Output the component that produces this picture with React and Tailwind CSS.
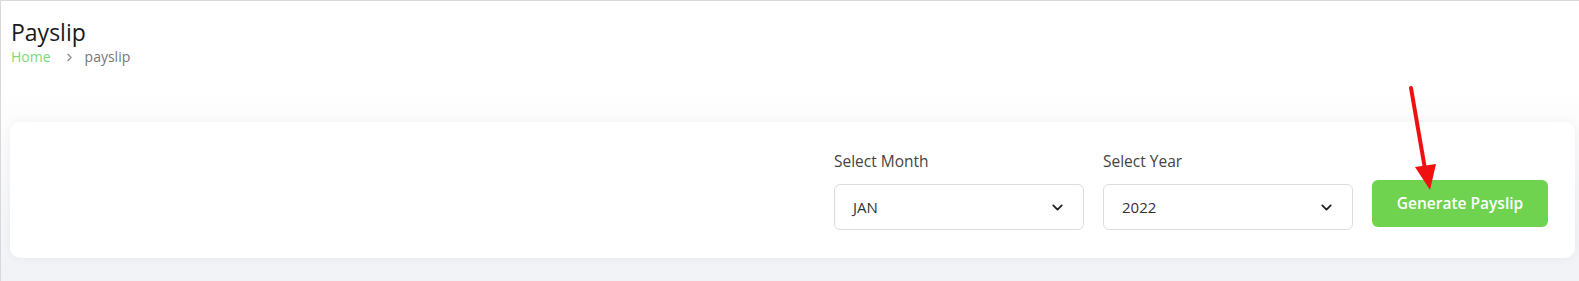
import { ChevronRight, ChevronDown } from 'lucide-react'

function SelectBox({ label, value }) {
  return (
    <div className="flex flex-col w-[250px]">
      <label className="text-[15.5px] text-[#444] mb-[13px] leading-5">{label}</label>
      <div className="h-[46px] border border-[#dcdcdc] rounded-[6px] bg-white flex items-center justify-between pl-[18px] pr-[17px] text-[15px] text-[#333]">
        <span>{value}</span>
        <ChevronDown size={17} strokeWidth={2.6} className="text-[#222]" />
      </div>
    </div>
  )
}

export default function App() {
  return (
    <div
      className="relative w-[1579px] h-[281px] border-t border-l border-[#d8d8d8] bg-gradient-to-b from-white from-[30%] to-[#f1f2f6] overflow-hidden"
      style={{ fontFamily: '"Open Sans", "Liberation Sans", sans-serif' }}
    >
      <div className="pl-[10px] pt-[17px]">
        <h1 className="text-[23px] leading-7 text-[#1a1a1a]">Payslip</h1>
        <div className="flex items-center text-[14px] leading-5 mt-[1px]">
          <span className="text-[#7dd87a]">Home</span>
          <ChevronRight size={13} className="text-[#888] ml-[12px] mr-[9px]" />
          <span className="text-[#777]">payslip</span>
        </div>
      </div>

      <div className="mt-[55px] ml-[9px] w-[1565px] h-[136px] bg-white rounded-[10px] shadow-[0_0_12px_rgba(0,0,0,0.05)] flex items-end justify-end pr-[27px] pb-[28px] gap-[19px]">
        <SelectBox label="Select Month" value="JAN" />
        <SelectBox label="Select Year" value="2022" />
        <button
          type="button"
          className="w-[176px] h-[47px] mb-[3px] bg-[#6fd34f] rounded-[6px] text-white text-[15.5px] font-semibold"
        >
          Generate Payslip
        </button>
      </div>

      <svg className="absolute left-0 top-0 pointer-events-none" width="1579" height="281">
        <line x1="1410" y1="87" x2="1424" y2="168" stroke="#f01010" strokeWidth="4" strokeLinecap="round" />
        <polygon points="1414,166 1435,163 1429,189" fill="#f01010" />
      </svg>
    </div>
  )
}
